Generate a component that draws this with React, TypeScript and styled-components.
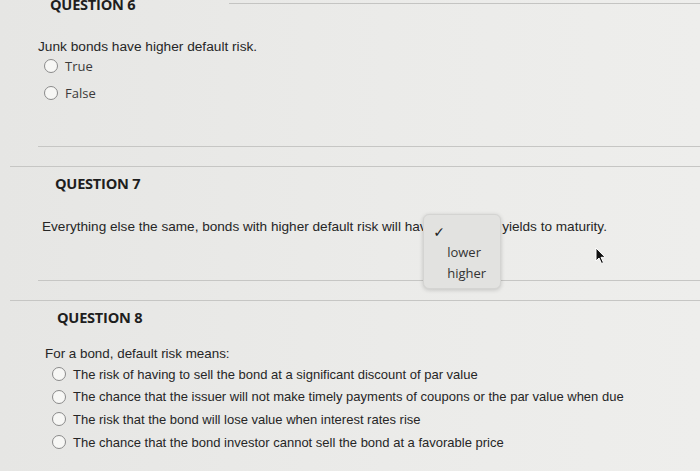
import React from "react";
import styled, { createGlobalStyle } from "styled-components";

const GlobalStyle = createGlobalStyle`
  html, body {
    margin: 0;
    padding: 0;
    background: #e9e9e7;
    overflow: hidden;
  }
`;

const q8Options = [
  "The risk of having to sell the bond at a significant discount of par value",
  "The chance that the issuer will not make timely payments of coupons or the par value when due",
  "The risk that the bond will lose value when interest rates rise",
  "The chance that the bond investor cannot sell the bond at a favorable price",
];

const App: React.FC = () => {
  return (
    <>
      <GlobalStyle />
      <Page>
        <Q6Head>
          <Title>QUESTION 6</Title>
          <TopRule />
        </Q6Head>
        <Prompt mt={25} pl={38} size={13.7}>
          Junk bonds have higher default risk.
        </Prompt>
        <Options pl={44} gap={5}>
          <Option>
            <Radio />
            <OptionLabel>True</OptionLabel>
          </Option>
          <Option>
            <Radio />
            <OptionLabel>False</OptionLabel>
          </Option>
        </Options>
        <Rule mt={42} inset={38} />
        <Rule mt={19} inset={10} />

        <Title mt={8} pl={55}>
          QUESTION 7
        </Title>
        <Prompt mt={28} pl={42} size={13.6}>
          Everything else the same, bonds with higher default risk will have
          <SelectAnchor>
            <Popup>
              <Check>✓</Check>
              <PopupItem first>lower</PopupItem>
              <PopupItem>higher</PopupItem>
            </Popup>
          </SelectAnchor>
          yields to maturity.
        </Prompt>
        <Rule mt={45} inset={38} />
        <Rule mt={19} inset={10} />

        <Title mt={8} pl={57}>
          QUESTION 8
        </Title>
        <Prompt mt={21} pl={45} size={13.4}>
          For a bond, default risk means:
        </Prompt>
        <Options pl={52} gap={0.7} mt={1}>
          {q8Options.map((o) => (
            <Option key={o}>
              <Radio />
              <AnswerLabel>{o}</AnswerLabel>
            </Option>
          ))}
        </Options>

        <Cursor viewBox="0 0 12 18" width="12" height="18">
          <path
            d="M1 1 L1 14 L4 11 L6.5 16.5 L8.5 15.6 L6 10.3 L10.2 10.3 Z"
            fill="#111"
            stroke="#fff"
            strokeWidth="1"
            strokeLinejoin="round"
          />
        </Cursor>
      </Page>
    </>
  );
};

export default App;

const Page = styled.div`
  position: relative;
  width: 700px;
  height: 471px;
  overflow: hidden;
  background: linear-gradient(90deg, #e6e6e4 0%, #ebebe9 55%, #eeeeec 100%);
  color: #2e2e2e;
  display: flex;
  flex-direction: column;
`;

const Q6Head = styled.div`
  display: flex;
  height: 14px;
  padding-left: 50px;
`;

const TopRule = styled.div`
  flex: 1;
  margin-left: 94px;
  margin-top: 3px;
  border-top: 1px solid #c4c4c2;
`;

const Title = styled.div<{ mt?: number; pl?: number }>`
  font-family: "Open Sans", "Noto Sans", sans-serif;
  font-weight: 700;
  font-size: 14.6px;
  line-height: 16px;
  height: 16px;
  letter-spacing: -0.25px;
  color: #1e1e1e;
  margin-top: ${(p) => (p.mt !== undefined ? p.mt : -4)}px;
  padding-left: ${(p) => p.pl || 0}px;
  white-space: nowrap;
`;

const Prompt = styled.div<{ mt: number; pl: number; size: number }>`
  font-family: "Liberation Sans", Arial, sans-serif;
  font-size: ${(p) => p.size}px;
  line-height: 16px;
  height: 16px;
  margin-top: ${(p) => p.mt}px;
  padding-left: ${(p) => p.pl}px;
  white-space: nowrap;
  color: #262626;
`;

const Options = styled.div<{ pl: number; gap: number; mt?: number }>`
  display: flex;
  flex-direction: column;
  gap: ${(p) => p.gap}px;
  padding-left: ${(p) => p.pl}px;
  margin-top: ${(p) => p.mt || 0}px;
`;

const Option = styled.div`
  display: flex;
  align-items: center;
  height: 22px;
  gap: 7px;
`;

const Radio = styled.span`
  width: 12px;
  height: 12px;
  border-radius: 50%;
  border: 1px solid #8a8a8a;
  background: #f7f7f5;
  flex-shrink: 0;
`;

const OptionLabel = styled.span`
  font-family: "Open Sans", "Noto Sans", sans-serif;
  font-size: 13px;
  color: #3a3a3a;
`;

const AnswerLabel = styled.span`
  font-family: "Liberation Sans", Arial, sans-serif;
  font-size: 13px;
  color: #262626;
  white-space: nowrap;
`;

const Rule = styled.div<{ mt: number; inset: number }>`
  margin-top: ${(p) => p.mt}px;
  margin-left: ${(p) => p.inset}px;
  height: 0;
  border-top: 1px solid #c6c6c4;
`;

const SelectAnchor = styled.span`
  position: relative;
  display: inline-block;
  width: 68px;
  height: 16px;
  vertical-align: top;
`;

const Popup = styled.div`
  position: absolute;
  left: -11px;
  top: -5px;
  width: 78px;
  height: 75px;
  box-sizing: border-box;
  border-radius: 6px;
  background: #e2e2e0;
  border: 1px solid #d4d4d2;
  box-shadow: 0 1px 4px rgba(0, 0, 0, 0.18);
  padding: 0 0 0 23px;
  font-family: "Open Sans", "Noto Sans", sans-serif;
  font-size: 13px;
  color: #333;
`;

const Check = styled.div`
  position: absolute;
  left: 9px;
  top: 9px;
  font-family: "DejaVu Sans", sans-serif;
  font-size: 14px;
  font-weight: 700;
  color: #222;
`;

const PopupItem = styled.div<{ first?: boolean }>`
  line-height: 21px;
  margin-top: ${(p) => (p.first ? 27 : 0)}px;
`;

const Cursor = styled.svg`
  position: absolute;
  left: 595px;
  top: 247px;
`;
